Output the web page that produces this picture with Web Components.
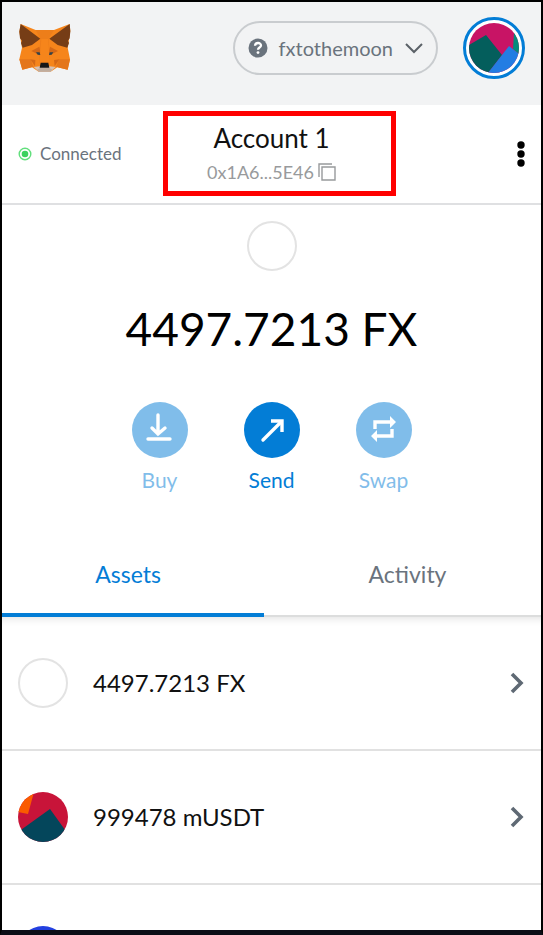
<!DOCTYPE html>
<html lang="en">
<head>
<meta charset="utf-8">
<meta name="viewport" content="width=device-width, initial-scale=1">
<title>Wallet</title>
<style>
body{margin:0;background:#fff;font-family:Lato,"Noto Sans",sans-serif;color:#111}
</style>
</head>
<body>
<wallet-app></wallet-app>
<script>
const base = `:host,*{box-sizing:border-box}button{font:inherit;color:inherit;background:none;border:0;padding:0;margin:0;cursor:pointer}svg{display:block;flex:none}`;
function define(name, css, html) {
  customElements.define(name, class extends HTMLElement {
    constructor() {
      super();
      const t = document.createElement('template');
      t.innerHTML = `<style>${base}${css}</style>${html}`;
      this.attachShadow({mode: 'open'}).append(t.content.cloneNode(true));
    }
  });
}

define('fox-logo', `:host{display:block}`, `
<svg width="54" height="50" viewBox="54 72 162 150" role="img" aria-label="Fox">
<path fill="#f6851b" d="M62 75 107 93H162L209 75 211 96 203 146 210 181 203 212 172 205 152 218H116L96 205 67 212 58 181 66 146 58 98Z"/>
<path fill="#e2761b" d="M107 93 121 119 117 190H150L146 119 162 93Z" opacity=".45"/>
<path fill="#763d16" d="M62 75 121 119 96 138 68 146 63 132 66 125 60 118 58 98ZM209 75 148 119 173 138 202 146 207 132 204 125 209 118 211 97Z"/>
<path fill="#e4761b" d="M58 181H92L100 203 67 212ZM210 181H177L168 203 203 212Z"/>
<path fill="#cd6116" d="M94 156 118 143 124 171ZM174 156 150 143 144 171ZM91 181 106 183 105 202ZM178 181 162 183 164 202Z" opacity=".8"/>
<path fill="#f6851b" d="M124 120H144L150 190H118Z"/>
<path fill="#33434a" d="M108 160 119 160 121 168 113 167ZM160 160 149 160 147 168 155 167Z"/>
<path fill="#d7c1b3" d="M101 204 119 202H149L167 204 151 218H117Z"/>
<path fill="#c0ad9e" d="M111 212 120 207H148L157 212 151 218H117Z"/>
<path fill="#161616" d="M122 191H145L148 206H119Z"/>
</svg>`);

define('network-picker', `:host{display:block}
button{display:flex;align-items:center;height:54px;padding:0 13px;border:2px solid #c9cccf;border-radius:27px;color:#6a737d;font-size:20px;line-height:24px}
slot{display:block}.name{margin:0 12px 0 11px}`, `
<button type="button" aria-haspopup="listbox">
<svg width="20" height="20" viewBox="0 0 20 20"><circle cx="10" cy="10" r="9.5" fill="#6a737d"/><path d="M7 7.7C7 4.2 13 4.1 13 7.4 13 9.6 10 9.5 10 11.7" fill="none" stroke="#fff" stroke-width="2.3"/><circle cx="10" cy="14.6" r="1.4" fill="#fff"/></svg>
<span class="name"><slot></slot></span>
<svg width="18" height="12" viewBox="0 0 18 12"><path d="M1 2 9 10 17 2" fill="none" stroke="#5b6167" stroke-width="2"/></svg>
</button>`);

define('account-avatar', `:host{display:block}
button{display:grid;place-items:center;width:62px;height:62px;border:3px solid #037dd6;border-radius:50%;background:#fff}
svg{border-radius:50%}`, `
<button type="button" aria-label="My accounts">
<svg width="50" height="50" viewBox="0 0 50 50"><path fill="#c81465" d="M0 0H50V50H0z"/><path fill="#028b7c" d="M45 10 50 14V31L44 26Z"/><path fill="#045e5c" d="M0 22 17 12 33 32 19 50H0Z"/><path fill="#237de3" d="M19 50 40 23 50 31V50Z"/></svg>
</button>`);

define('app-header', `:host{display:flex;align-items:center;gap:25px;padding:15px 16px 26px 16px;background:#f2f3f4}
fox-logo{margin-right:auto}`, `
<fox-logo></fox-logo><network-picker><slot></slot></network-picker><account-avatar></account-avatar>`);

define('account-bar', `:host{display:grid;grid-template-columns:1fr auto 1fr;align-items:center;height:100px;padding:0 16px;border-bottom:2px solid #dfe0e2}
.status{display:flex;align-items:center;gap:8px;font-size:17px;line-height:20px;color:#6a737d}
.account{position:relative;display:grid;justify-items:center;row-gap:4px}
.account::after{content:"";position:absolute;inset:-11px -60px -10px -44px;border:5px solid #f00;pointer-events:none}
.title{font-size:26px;line-height:32px;color:#111}
.address{display:flex;align-items:center;gap:4px;font-size:18px;line-height:28px;color:#989a9c}
.menu{justify-self:end;padding:8px 0}`, `
<div class="status"><svg width="14" height="14" viewBox="0 0 14 14"><circle cx="7" cy="7" r="5.8" fill="#fff" stroke="#61df7c" stroke-width="1.4"/><circle cx="7" cy="7" r="3.3" fill="#3bd25e"/></svg><slot name="status"></slot></div>
<button class="account" type="button"><span class="title"><slot name="name"></slot></span>
<span class="address"><slot name="address"></slot><svg width="18" height="18" viewBox="0 0 18 18"><path d="M1 14V1H14M4 4H17V17H4Z" fill="none" stroke="#989a9c" stroke-width="1.4"/></svg></span></button>
<button class="menu" type="button" aria-label="Account options"><svg width="8" height="26" viewBox="0 0 8 26"><g fill="#000"><circle cx="4" cy="4" r="3.7"/><circle cx="4" cy="13" r="3.7"/><circle cx="4" cy="22" r="3.7"/></g></svg></button>`);

define('token-icon', `:host{display:block;width:50px;height:50px;border-radius:50%;overflow:hidden;flex:none}
:host([kind=blank]){border:2px solid #e3e3e3}
:host([kind=blue]){background:#2340e0}
svg{display:none}:host([kind=usdt]) svg{display:block}`, `
<svg width="50" height="50" viewBox="0 0 50 50"><path fill="#c81439" d="M0 0H50V50H0z"/><path fill="#fa5b00" d="M0 0H16L10 22 0 20Z"/><path fill="#04465b" d="M0 40 32 17 50 42V50H0Z"/></svg>`);

define('balance-view', `:host{display:flex;flex-direction:column;align-items:center;padding:16px 0 0}
.amount{margin-top:28px;font-size:46px;line-height:60px;color:#000}`, `
<token-icon kind="blank"></token-icon><div class="amount"><slot></slot></div>`);

const icons = {
  buy: '<path d="M26 13V32M20 26 26 32 33 26M16 37H38" stroke-linecap="round"/>',
  send: '<path d="M19 38 37 20" stroke-linecap="round"/><path d="M27 19H38V30"/>',
  swap: '<path d="M19 27V20H36M36 27V34H20"/><path d="M34 14 40 20 34 26ZM21 28 15 34 21 40Z" fill="#fff" stroke="none"/>'
};
customElements.define('action-button', class extends HTMLElement {
  constructor() {
    super();
    const t = document.createElement('template');
    t.innerHTML = `<style>${base}:host{display:block}
button{display:grid;justify-items:center;row-gap:9px;width:100%;font-size:21px;line-height:26px;color:#037dd6}
button:disabled{opacity:.5;cursor:default}
.disc{display:grid;place-items:center;width:56px;height:56px;border-radius:50%;background:#037dd6}</style>
<button type="button"${this.hasAttribute('off') ? ' disabled' : ''}><span class="disc"><svg width="56" height="56" viewBox="0 0 56 56" fill="none" stroke="#fff" stroke-width="3.4">${icons[this.getAttribute('icon')]}</svg></span><span><slot></slot></span></button>`;
    this.attachShadow({mode: 'open'}).append(t.content.cloneNode(true));
  }
});

define('action-bar', `:host{display:grid;grid-template-columns:repeat(3,88px);column-gap:24px;justify-content:center;padding:43px 0 61px}`, `<slot></slot>`);

define('tab-bar', `:host{display:block}
.tabs{display:flex}
button{height:63px;padding:0 10px 20px;font-size:23px;line-height:28px;color:#6a737d;border-bottom:2px solid #dcdddd}
button:first-child{flex:17;padding-left:0;color:#037dd6;border-bottom:4px solid #037dd6}
button:last-child{flex:18;padding-right:0;padding-bottom:22px}`, `
<div class="tabs" role="tablist"><button type="button" role="tab" aria-selected="true"><slot name="first"></slot></button><button type="button" role="tab" aria-selected="false"><slot name="second"></slot></button></div>`);

define('asset-row', `:host{display:block}
button{display:flex;align-items:center;gap:25px;width:100%;padding:41px 16px;border-bottom:2px solid #e1e1e1;font-size:24px;line-height:30px;color:#111;text-align:left}
.label{flex:1}`, `
<button type="button"><slot name="icon"></slot><span class="label"><slot></slot></span>
<svg width="16" height="22" viewBox="0 0 16 22"><path d="M3 2 12 11 3 20" fill="none" stroke="#5f6974" stroke-width="3.6"/></svg></button>`);

define('wallet-app', `:host{display:block;height:100vh;overflow:hidden;background:#fff;border:2px solid #000;border-bottom:5px solid #0b0d16}
main{display:block}.list{box-shadow:inset 0 8px 8px -7px #0002}`, `
<app-header>fxtothemoon</app-header>
<main>
<account-bar><span slot="status">Connected</span><span slot="name">Account 1</span><span slot="address">0x1A6...5E46</span></account-bar>
<balance-view>4497.7213 FX</balance-view>
<action-bar><action-button icon="buy" off>Buy</action-button><action-button icon="send">Send</action-button><action-button icon="swap" off>Swap</action-button></action-bar>
<tab-bar><span slot="first">Assets</span><span slot="second">Activity</span></tab-bar>
<div class="list">
<asset-row><token-icon slot="icon" kind="blank"></token-icon>4497.7213 FX</asset-row>
<asset-row><token-icon slot="icon" kind="usdt"></token-icon>999478 mUSDT</asset-row>
<asset-row><token-icon slot="icon" kind="blue"></token-icon></asset-row>
</div>
</main>`);
</script>
</body>
</html>
